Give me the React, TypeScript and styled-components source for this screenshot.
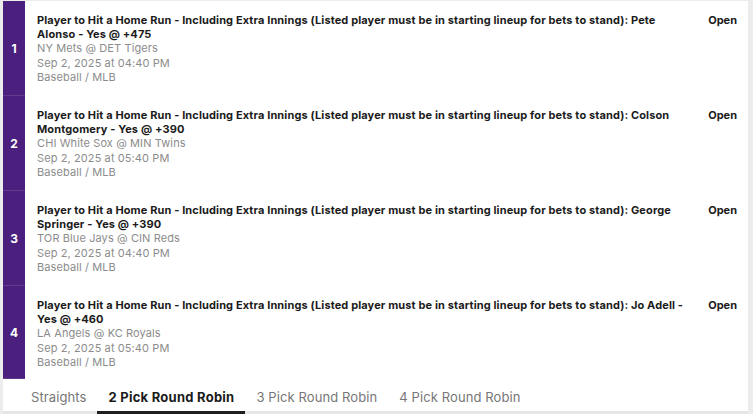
import React from "react";
import styled, { createGlobalStyle } from "styled-components";

const Global = createGlobalStyle`
  html, body { margin: 0; padding: 0; background: #ffffff; }
  body { font-family: Inter, "Noto Sans", "Liberation Sans", sans-serif; }
`;

const Frame = styled.div`
  width: 753px;
  height: 414px;
  box-sizing: border-box;
  background: #ececec;
  padding: 1px 5px 0 3px;
  overflow: hidden;
`;

const Card = styled.div`
  background: #ffffff;
  height: 410px;
  display: flex;
  flex-direction: column;
  border-bottom: 3px solid #e6e6e6;
`;

const List = styled.div`
  display: flex;
  flex-direction: column;
`;

const Row = styled.div`
  display: flex;
  height: 95px;
  &:last-child { height: 93px; }
`;

const Leg = styled.div`
  width: 22px;
  flex: none;
  background: #4a1f7e;
  color: #ffffff;
  font-weight: 700;
  font-size: 12px;
  display: flex;
  align-items: center;
  justify-content: center;
  box-shadow: inset 0 -1px 0 rgba(255, 255, 255, 0.12);
`;

const Body = styled.div`
  flex: 1;
  display: flex;
  padding: 12px 11px 0 12px;
  gap: 16px;
`;

const Info = styled.div`
  flex: 1;
  display: flex;
  flex-direction: column;
`;

const Title = styled.div`
  font-size: 11px;
  line-height: 14px;
  font-weight: 700;
  color: #1b1b1b;
  letter-spacing: 0.12px;
`;

const Meta = styled.div`
  font-size: 11px;
  line-height: 14.5px;
  color: #8c8c8c;
  letter-spacing: 0.1px;
`;

const Status = styled.div`
  font-size: 11px;
  line-height: 14px;
  font-weight: 700;
  color: #1b1b1b;
  flex: none;
`;

const Tabs = styled.div`
  display: flex;
  align-items: stretch;
  height: 33px;
  padding-left: 17px;
`;

const Tab = styled.div<{ $active?: boolean }>`
  font-size: 13px;
  padding: 0 11px;
  display: flex;
  align-items: center;
  color: ${(p) => (p.$active ? "#1b1b1b" : "#767676")};
  font-weight: ${(p) => (p.$active ? 700 : 400)};
  letter-spacing: ${(p) => (p.$active ? "0.25px" : "0.1px")};
  box-shadow: ${(p) => (p.$active ? "inset 0 -3px 0 #1f1f1f" : "none")};
  margin-bottom: -3px;
`;

const legs = [
  {
    n: 1,
    title:
      "Player to Hit a Home Run - Including Extra Innings (Listed player must be in starting lineup for bets to stand): Pete Alonso - Yes @ +475",
    game: "NY Mets @ DET Tigers",
    time: "Sep 2, 2025 at 04:40 PM",
  },
  {
    n: 2,
    title:
      "Player to Hit a Home Run - Including Extra Innings (Listed player must be in starting lineup for bets to stand): Colson Montgomery - Yes @ +390",
    game: "CHI White Sox @ MIN Twins",
    time: "Sep 2, 2025 at 05:40 PM",
  },
  {
    n: 3,
    title:
      "Player to Hit a Home Run - Including Extra Innings (Listed player must be in starting lineup for bets to stand): George Springer - Yes @ +390",
    game: "TOR Blue Jays @ CIN Reds",
    time: "Sep 2, 2025 at 04:40 PM",
  },
  {
    n: 4,
    title:
      "Player to Hit a Home Run - Including Extra Innings (Listed player must be in starting lineup for bets to stand): Jo Adell - Yes @ +460",
    game: "LA Angels @ KC Royals",
    time: "Sep 2, 2025 at 05:40 PM",
  },
];

export default function App() {
  return (
    <>
      <Global />
      <Frame>
        <Card>
          <List>
            {legs.map((l) => (
              <Row key={l.n}>
                <Leg>{l.n}</Leg>
                <Body>
                  <Info>
                    <Title>{l.title}</Title>
                    <Meta>{l.game}</Meta>
                    <Meta>{l.time}</Meta>
                    <Meta>Baseball / MLB</Meta>
                  </Info>
                  <Status>Open</Status>
                </Body>
              </Row>
            ))}
          </List>
          <Tabs>
            <Tab>Straights</Tab>
            <Tab $active>2 Pick Round Robin</Tab>
            <Tab>3 Pick Round Robin</Tab>
            <Tab>4 Pick Round Robin</Tab>
          </Tabs>
        </Card>
      </Frame>
    </>
  );
}
